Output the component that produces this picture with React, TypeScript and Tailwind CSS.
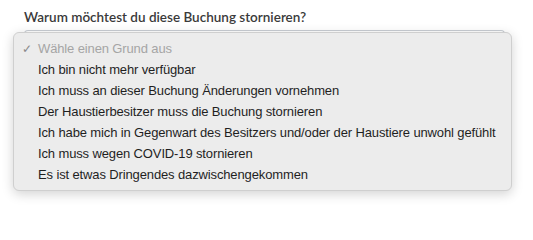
import React from "react";

const options = [
  "Ich bin nicht mehr verfügbar",
  "Ich muss an dieser Buchung Änderungen vornehmen",
  "Der Haustierbesitzer muss die Buchung stornieren",
  "Ich habe mich in Gegenwart des Besitzers und/oder der Haustiere unwohl gefühlt",
  "Ich muss wegen COVID-19 stornieren",
  "Es ist etwas Dringendes dazwischengekommen",
];

export default function App() {
  return (
    <div className="w-[533px] h-[209px] bg-white overflow-hidden">
      <div className="pl-[24px] pt-[8px] h-[30px] text-[13.5px] font-semibold text-[#3a3a3a] font-['Lato',sans-serif] leading-[18px]">
        Warum möchtest du diese Buchung stornieren?
      </div>
      <div className="relative">
        <div className="ml-[24px] mr-[28px] h-[40px] border-t border-x border-[#c9ced4] rounded-t-[4px]" />
        <div className="absolute left-[13px] top-[2px] w-[499px] rounded-[6px] bg-[#ececec] border border-[#cfcfcf] shadow-[0_3px_12px_rgba(0,0,0,0.18)] py-[5px] font-['Liberation_Sans',sans-serif] text-[13px] tracking-[-0.13px] text-[#1f1f1f]">
          <div className="h-[21px] flex items-center text-[#a5a5a5]">
            <span className="w-[24px] pl-[8px] text-[12px] text-[#8a8a8a]">✓</span>
            <span>Wähle einen Grund aus</span>
          </div>
          {options.map((o) => (
            <div key={o} className="h-[21px] flex items-center pl-[24px]">
              {o}
            </div>
          ))}
        </div>
      </div>
    </div>
  );
}
